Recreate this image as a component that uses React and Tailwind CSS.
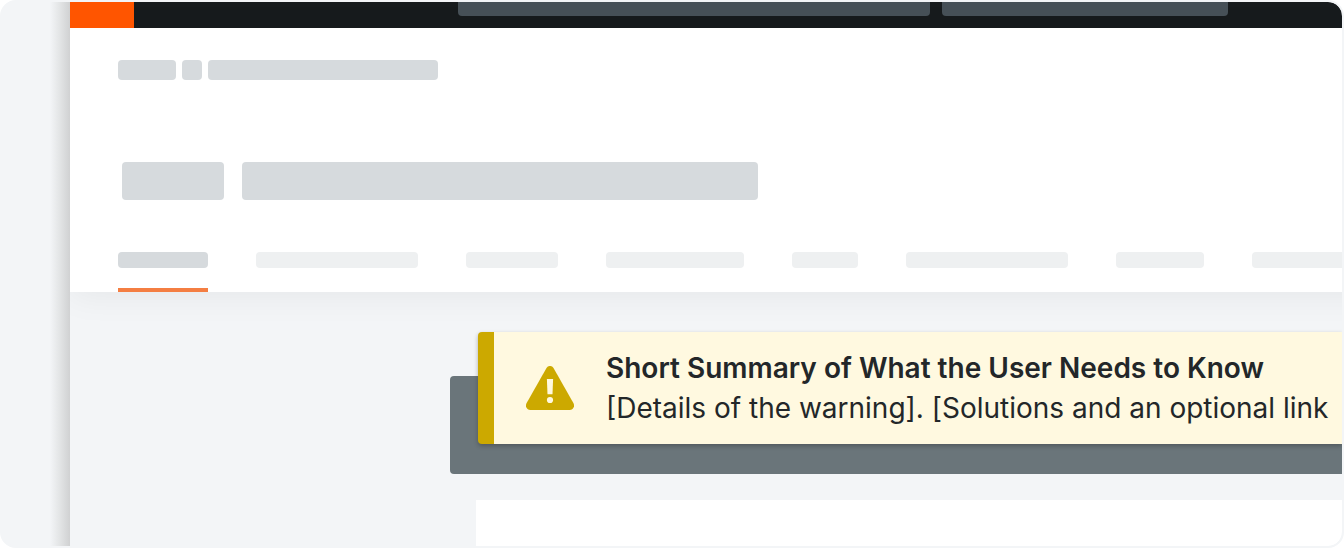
import React from "react";

function Placeholder({ className }) {
  return <div className={`shrink-0 rounded-sm ${className}`} />;
}

function TopBar() {
  return (
    <div className="flex h-[26px] bg-[#171b1d]">
      <div className="w-16 shrink-0 bg-[#ff5500]" />
      <div className="ml-[324px] flex h-[14px] gap-3">
        <div className="w-[472px] shrink-0 rounded-b-sm bg-[#465057]" />
        <div className="w-[286px] shrink-0 rounded-b-sm bg-[#465057]" />
      </div>
    </div>
  );
}

function PageHeader() {
  return (
    <header className="-mr-12 bg-white pt-8 pl-12 shadow-[0_4px_32px_rgba(0,0,0,0.06)]">
      <div className="flex gap-1.5">
        <Placeholder className="h-5 w-[58px] bg-[#d6dadd]" />
        <Placeholder className="h-5 w-5 bg-[#d6dadd]" />
        <Placeholder className="h-5 w-[230px] bg-[#d6dadd]" />
      </div>
      <div className="mt-[82px] ml-1 flex gap-[18px]">
        <Placeholder className="h-[38px] w-[102px] bg-[#d6dadd]" />
        <Placeholder className="h-[38px] w-[516px] bg-[#d6dadd]" />
      </div>
      <nav className="mt-[52px] flex gap-12 overflow-hidden">
        <div className="h-10 shrink-0 border-b-4 border-[#f47e42]">
          <Placeholder className="h-4 w-[90px] bg-[#d6dadd]" />
        </div>
        <Placeholder className="h-4 w-[162px] bg-[#eef0f1]" />
        <Placeholder className="h-4 w-[92px] bg-[#eef0f1]" />
        <Placeholder className="h-4 w-[138px] bg-[#eef0f1]" />
        <Placeholder className="h-4 w-[66px] bg-[#eef0f1]" />
        <Placeholder className="h-4 w-[162px] bg-[#eef0f1]" />
        <Placeholder className="h-4 w-[88px] bg-[#eef0f1]" />
        <Placeholder className="h-4 w-[162px] bg-[#eef0f1]" />
      </nav>
    </header>
  );
}

function WarningIcon() {
  return (
    <svg viewBox="0 0 48 44" className="h-11 w-12 shrink-0" aria-hidden="true">
      <path
        fill="#cca900"
        d="M20.5 2c1.6-2.7 5.4-2.7 7 0l20 35.2c1.7 3-.3 6.8-3.9 6.8H4.4c-3.6 0-5.6-3.8-3.9-6.8z"
      />
      <path fill="#fff9e0" d="M20.9 13h6.2l-.6 15.200h-5z" />
      <circle cx="24" cy="34" r="3.1" fill="#fff9e0" />
    </svg>
  );
}

function WarningBanner() {
  return (
    <div
      role="alert"
      className="col-start-1 row-start-1 ml-7 flex min-w-0 items-center gap-8 self-start overflow-hidden rounded-l-sm border-l-16 border-[#cca900] bg-[#fff9e0] py-4 pl-8 shadow-[0_2px_4px_rgba(35,38,41,0.35)]"
    >
      <WarningIcon />
      <div className="text-[28px] leading-10 whitespace-nowrap text-[#232729]">
        <p className="font-semibold">Short Summary of What the User Needs to Know</p>
        <p>[Details of the warning]. [Solutions and an optional link</p>
      </div>
    </div>
  );
}

export default function App() {
  return (
    <div className="flex overflow-hidden rounded-2xl border-2 border-[#f3f5f7] bg-[#f3f5f7] font-['Inter',sans-serif]">
      <div className="flex w-[68px] shrink-0 justify-end">
        <div className="w-5 bg-linear-to-r from-[#f3f5f7] via-[#e2e4e5] to-[#d0d1d2]" />
      </div>
      <main className="min-w-0 flex-1 overflow-hidden rounded-r-[14px] bg-[#f3f5f7]">
        <TopBar />
        <PageHeader />
        <section className="mt-10 ml-[380px] grid grid-cols-[minmax(0,1fr)]">
          <div className="col-start-1 row-start-1 mt-11 h-[98px] rounded-l-sm bg-[#6a757a]" />
          <WarningBanner />
        </section>
        <div className="mt-[26px] ml-[406px] h-[46px] bg-white" />
      </main>
    </div>
  );
}
